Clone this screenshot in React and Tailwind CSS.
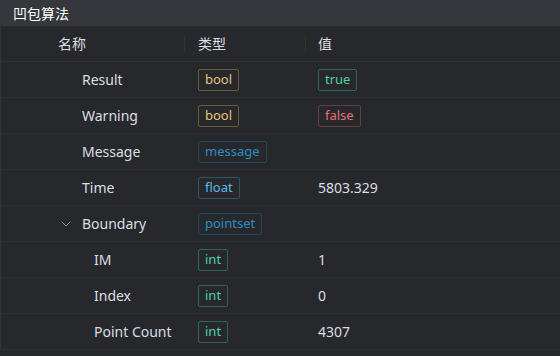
import React from 'react';
import { ChevronDown } from 'lucide-react';

const TYPE_STYLES = {
  bool: 'border-[#6a5a3c] text-[#e8c27a]',
  message: 'border-[#1d4a5f] text-[#2b8fc0]',
  float: 'border-[#2d5668] text-[#5cb8e6]',
  pointset: 'border-[#1d4a5f] text-[#2b8fc0]',
  int: 'border-[#2c6656] text-[#4fd1a0]',
};

const VALUE_STYLES = {
  true: 'border-[#2c6656] text-[#4fd1a0]',
  false: 'border-[#6b3c3e] text-[#e8706f]',
};

const rows = [
  { name: 'Result', type: 'bool', value: 'true', badge: true },
  { name: 'Warning', type: 'bool', value: 'false', badge: true },
  { name: 'Message', type: 'message' },
  { name: 'Time', type: 'float', value: '5803.329' },
  { name: 'Boundary', type: 'pointset', expandable: true },
  { name: 'IM', type: 'int', value: '1', child: true },
  { name: 'Index', type: 'int', value: '0', child: true },
  { name: 'Point Count', type: 'int', value: '4307', child: true },
];

function Tag({ children, className }) {
  return (
    <span className={`inline-flex h-[22px] items-center rounded-[2px] border px-[6px] text-[13px] leading-none ${className}`}>
      {children}
    </span>
  );
}

export default function App() {
  return (
    <div className="w-[560px] h-[356px] overflow-hidden bg-[#26282c] text-[#dcdee2] text-[14px] font-['Noto_Sans','Noto_Sans_CJK_SC',sans-serif]">
      <div className="h-[26px] bg-[#35373c] flex items-center pl-[13px] text-white text-[14px] font-['Noto_Sans_CJK_SC',sans-serif]">
        凹包算法
      </div>
      <div className="border-l border-[#313338]">
        <div className="grid grid-cols-[183px_121px_1fr] h-[36px] items-center bg-[#27282c] border-b border-[#303237] font-['Noto_Sans_CJK_SC',sans-serif]">
          <div className="pl-[57px]">名称</div>
          <div className="flex items-center">
            <span className="h-[16px] w-px bg-[#303237]" />
            <span className="pl-[13px]">类型</span>
          </div>
          <div className="flex items-center">
            <span className="h-[16px] w-px bg-[#303237]" />
            <span className="pl-[12px]">值</span>
          </div>
        </div>
        {rows.map((r) => (
          <div key={r.name} className="grid grid-cols-[183px_121px_1fr] h-[36px] items-center border-b border-[#2d2f34]">
            <div className={`flex items-center ${r.child ? 'pl-[93px]' : 'pl-[57px]'}`}>
              {!r.child && (
                <span className="w-[24px] flex items-center">
                  {r.expandable && <ChevronDown size={16} strokeWidth={1.5} className="text-[#8a8c90]" />}
                </span>
              )}
              <span>{r.name}</span>
            </div>
            <div className="pl-[14px]">
              <Tag className={TYPE_STYLES[r.type]}>{r.type}</Tag>
            </div>
            <div className="pl-[13px]">
              {r.badge ? <Tag className={VALUE_STYLES[r.value]}>{r.value}</Tag> : r.value}
            </div>
          </div>
        ))}
      </div>
    </div>
  );
}
